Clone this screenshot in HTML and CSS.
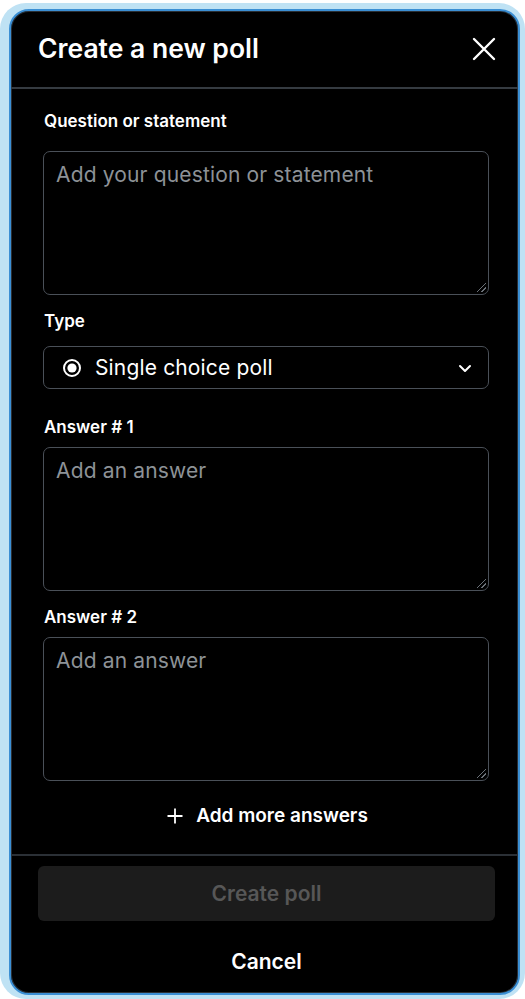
FILE: index.html
```html
<!DOCTYPE html>
<html lang="en">
<head>
<meta charset="utf-8">
<title>Create a new poll</title>
<link rel="stylesheet" href="styles.css">
</head>
<body>
<div class="halo">
  <div class="panel">
    <header class="head">
      <h1 class="title">Create a new poll</h1>
      <button class="close" aria-label="Close">
        <svg width="24" height="24" viewBox="0 0 24 24"><path d="M2 2 L22 22 M22 2 L2 22" stroke="#fff" stroke-width="2.4" stroke-linecap="round" fill="none"/></svg>
      </button>
    </header>
    <main class="body">
      <label class="label lbl-q">Question or statement</label>
      <div class="area"><span class="ph">Add your question or statement</span><span class="grip"></span></div>
      <label class="label lbl-t">Type</label>
      <div class="select">
        <svg class="radio" width="20" height="20" viewBox="0 0 20 20"><circle cx="10" cy="10" r="8" stroke="#fff" stroke-width="2" fill="none"/><circle cx="10" cy="10" r="4.6" fill="#fff"/></svg>
        <span class="sel-text">Single choice poll</span>
        <svg class="chev" width="14" height="10" viewBox="0 0 14 10"><path d="M2 3 L7 8 L12 3" stroke="#fff" stroke-width="2" fill="none" stroke-linecap="round" stroke-linejoin="round"/></svg>
      </div>
      <label class="label lbl-a">Answer # 1</label>
      <div class="area"><span class="ph">Add an answer</span><span class="grip"></span></div>
      <label class="label lbl-a2">Answer # 2</label>
      <div class="area"><span class="ph">Add an answer</span><span class="grip"></span></div>
      <div class="more">
        <svg width="18" height="18" viewBox="0 0 18 18"><path d="M9 1.5 V16.5 M1.5 9 H16.5" stroke="#fff" stroke-width="1.8" fill="none"/></svg>
        <span>Add more answers</span>
      </div>
    </main>
    <footer class="foot">
      <button class="create" disabled>Create poll</button>
      <button class="cancel">Cancel</button>
    </footer>
  </div>
</div>
</body>
</html>
```
FILE: styles.css
```css
* { box-sizing: border-box; }
html, body { margin: 0; padding: 0; background: #fff; }
body { font-family: Inter, "Noto Sans", sans-serif; color: #fff; }

.halo {
  margin-top: 3px;
  height: 996px;
  background: #bfe2f4;
  border-radius: 26px;
  padding: 6px 5px 4px 9px;
}
.panel {
  height: 100%;
  background: #000;
  border: 2px solid #3b8fd4;
  border-radius: 20px;
  box-shadow: inset 0 0 0 1px #2a2f35;
  display: flex;
  flex-direction: column;
  overflow: hidden;
}

.head {
  height: 78px;
  display: flex;
  align-items: center;
  justify-content: space-between;
  padding: 0 22px 3px 27px;
  border-bottom: 2px solid #353b41;
}
.title { margin: 0; font-size: 26.5px; font-weight: 600; letter-spacing: 0; }
.close { background: none; border: 0; padding: 0; display: flex; margin-top: 2px; }

.body {
  flex: 1;
  padding: 21px 29px 0 32px;
  display: flex;
  flex-direction: column;
}
.label { font-size: 17px; font-weight: 600; line-height: 22px; padding-left: 1px; }
.lbl-q { margin-bottom: 19px; }
.lbl-t { margin-top: 15px; margin-bottom: 14px; }
.lbl-a { margin-top: 27px; margin-bottom: 9px; }
.lbl-a2 { margin-top: 15px; margin-bottom: 9px; }

.area {
  position: relative;
  height: 144px;
  border: 1.5px solid #4a5058;
  border-radius: 7px;
  padding: 8px 12px;
}
.ph { font-size: 21px; color: #8d9297; line-height: 30px; letter-spacing: 0.15px; }
.grip {
  position: absolute; right: 2px; bottom: 2px; width: 9px; height: 9px;
  background: linear-gradient(135deg, transparent 45%, #6a7077 45%, #6a7077 55%, transparent 55%, transparent 72%, #6a7077 72%, #6a7077 82%, transparent 82%);
}

.select {
  height: 43px;
  border: 1.5px solid #4a5058;
  border-radius: 7px;
  display: flex;
  align-items: center;
  padding: 0 16px 0 18px;
}
.radio { flex: none; }
.sel-text { font-size: 21px; margin-left: 13px; flex: 1; letter-spacing: 0.15px; }
.chev { flex: none; }

.more {
  margin-top: 23px;
  display: flex;
  justify-content: center;
  align-items: center;
  gap: 12px;
  font-size: 19px;
  font-weight: 600;
  padding-left: 2px;
}

.foot {
  border-top: 2px solid #2b3036;
  padding: 10px 23px 0 27px;
  height: 139px;
  display: flex;
  flex-direction: column;
}
.create {
  height: 55px;
  border: 0;
  border-radius: 6px;
  background: #1c1c1c;
  color: #575757;
  font-family: inherit;
  font-size: 21px;
  font-weight: 600;
}
.cancel {
  margin-top: 18px;
  background: none;
  border: 0;
  color: #fff;
  font-family: inherit;
  font-size: 21px;
  font-weight: 600;
  height: 44px;
}
```
